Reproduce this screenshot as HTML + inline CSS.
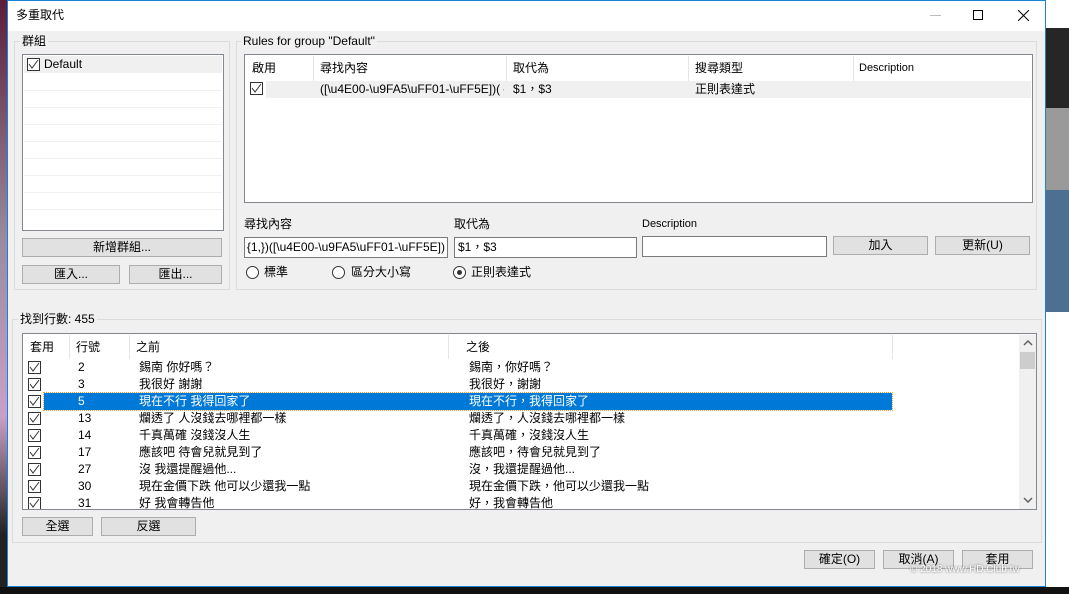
<!DOCTYPE html>
<html><head><meta charset="utf-8"><style>
*{box-sizing:border-box;margin:0;padding:0}
body{width:1069px;height:594px;overflow:hidden;position:relative;background:#fff;font-family:"Liberation Sans","Noto Sans CJK TC",sans-serif;font-size:12px;color:#000}
.a{position:absolute}
.win{left:7px;top:0;width:1039px;height:587px;background:#f0f0f0;border:1px solid #1883d7}
.grp{position:absolute;border:1px solid #dcdcdc}
.lbl{position:absolute;background:#f0f0f0;padding:0 2px;line-height:14px}
.box{position:absolute;background:#fff;border:1px solid #828790}
.btn{position:absolute;background:#e1e1e1;border:1px solid #adadad;text-align:center;line-height:16px}
.t{position:absolute;white-space:nowrap;line-height:17px}
.cb{position:absolute;width:13px;height:13px;border:1px solid #333;background:#fff}
.cb svg{position:absolute;left:0;top:0}
.rd{position:absolute;width:13px;height:13px;border:1px solid #333;border-radius:50%;background:#fff}
.inp{position:absolute;background:#fff;border:1px solid #7a7a7a;line-height:18px;padding-left:3px;overflow:hidden;white-space:nowrap}
.hl{position:absolute;height:1px;background:#f0f0f0}
.w{color:#fff}
</style></head><body>
<div class="a" style="left:0;top:0;width:7px;height:594px;background:linear-gradient(#5a1d3a,#9a8aa0 40%,#c9a0c8 70%,#222 90%)"></div>
<div class="a" style="left:1046px;top:0;width:23px;height:594px;background:#fff"></div>
<div class="a" style="left:1046px;top:28px;width:23px;height:80px;background:#262626"></div>
<div class="a" style="left:1046px;top:108px;width:23px;height:82px;background:#9a9a9a"></div>
<div class="a" style="left:1046px;top:190px;width:23px;height:122px;background:#4d6f92"></div>
<div class="a" style="left:0;top:587px;width:1069px;height:7px;background:#111"></div>
<div class="a win"></div>
<div class="a" style="left:8px;top:1px;width:1037px;height:30px;background:#fff"></div>
<div class="t" style="left:16px;top:7px">多重取代</div>
<div class="a" style="left:930px;top:15px;width:11px;height:1px;background:#bbb"></div>
<div class="a" style="left:973px;top:10px;width:10px;height:10px;border:1px solid #000"></div>
<svg class="a" style="left:1018px;top:10px" width="11" height="11"><path d="M0 0L11 11M11 0L0 11" stroke="#000" stroke-width="1"/></svg>

<div class="grp" style="left:14px;top:41px;width:216px;height:249px"></div>
<div class="lbl" style="left:20px;top:34px">群組</div>
<div class="box" style="left:22px;top:54px;width:202px;height:177px">
<div class="a" style="left:1px;top:1px;width:198px;height:17px;background:#f0f0f0"></div>
<div class="hl" style="left:1px;top:35px;width:198px"></div><div class="hl" style="left:1px;top:52px;width:198px"></div><div class="hl" style="left:1px;top:69px;width:198px"></div><div class="hl" style="left:1px;top:86px;width:198px"></div><div class="hl" style="left:1px;top:103px;width:198px"></div><div class="hl" style="left:1px;top:120px;width:198px"></div><div class="hl" style="left:1px;top:137px;width:198px"></div><div class="hl" style="left:1px;top:154px;width:198px"></div>
<div class="cb" style="left:4px;top:3px"><svg width="11" height="11"><path d="M1 5L4 9L10 1" stroke="#333" fill="none"/></svg></div>
<div class="t" style="left:21px;top:1px">Default</div>
</div>
<div class="btn" style="left:22px;top:238px;width:200px;height:19px">新增群組...</div>
<div class="btn" style="left:22px;top:265px;width:98px;height:19px">匯入...</div>
<div class="btn" style="left:129px;top:265px;width:93px;height:19px">匯出...</div>

<div class="grp" style="left:236px;top:41px;width:801px;height:249px"></div>
<div class="lbl" style="left:241px;top:34px">Rules for group "Default"</div>
<div class="box" style="left:244px;top:54px;width:789px;height:149px">
<div class="a" style="left:0;top:26px;width:786px;height:17px;background:#f0f0f0"></div>
<div class="a" style="left:68px;top:1px;width:1px;height:25px;background:#e5e5e5"></div>
<div class="a" style="left:261px;top:1px;width:1px;height:25px;background:#e5e5e5"></div>
<div class="a" style="left:443px;top:1px;width:1px;height:25px;background:#e5e5e5"></div>
<div class="a" style="left:608px;top:1px;width:1px;height:25px;background:#e5e5e5"></div>
<div class="a" style="left:0;top:26px;width:21px;height:17px;background:#fff"></div>
<div class="t" style="left:7px;top:5px">啟用</div>
<div class="t" style="left:75px;top:5px">尋找內容</div>
<div class="t" style="left:268px;top:5px">取代為</div>
<div class="t" style="left:450px;top:5px">搜尋類型</div>
<div class="t" style="left:614px;top:5px;font-size:11px">Description</div>
<div class="cb" style="left:5px;top:27px"><svg width="11" height="11"><path d="M1 5L4 9L10 1" stroke="#333" fill="none"/></svg></div>
<div class="t" style="left:75px;top:26px;width:184px;overflow:hidden">([\u4E00-\u9FA5\uFF01-\uFF5E])( {...</div>
<div class="t" style="left:268px;top:26px">$1，$3</div>
<div class="t" style="left:450px;top:26px">正則表達式</div>
</div>
<div class="t" style="left:244px;top:216px">尋找內容</div>
<div class="t" style="left:454px;top:216px">取代為</div>
<div class="t" style="left:642px;top:216px;font-size:11px">Description</div>
<div class="inp" style="left:244px;top:237px;width:204px;height:21px;padding:0 2px;direction:rtl;text-align:right"><span style="direction:ltr;unicode-bidi:bidi-override">E])( {1,})([\u4E00-\u9FA5\uFF01-\uFF5E])</span></div>
<div class="inp" style="left:454px;top:237px;width:183px;height:21px">$1，$3</div>
<div class="inp" style="left:642px;top:236px;width:185px;height:21px"></div>
<div class="btn" style="left:833px;top:236px;width:95px;height:19px">加入</div>
<div class="btn" style="left:935px;top:236px;width:95px;height:19px">更新(U)</div>
<div class="rd" style="left:246px;top:266px"></div><div class="t" style="left:264px;top:264px">標準</div>
<div class="rd" style="left:332px;top:266px"></div><div class="t" style="left:351px;top:264px">區分大小寫</div>
<div class="rd" style="left:453px;top:266px"><div class="a" style="left:3px;top:3px;width:5px;height:5px;border-radius:50%;background:#333"></div></div><div class="t" style="left:471px;top:264px">正則表達式</div>

<div class="grp" style="left:12px;top:319px;width:1030px;height:224px"></div>
<div class="lbl" style="left:18px;top:312px">找到行數: 455</div>
<div class="box" style="left:22px;top:333px;width:1015px;height:177px;overflow:hidden">
<div class="a" style="left:46px;top:1px;width:1px;height:24px;background:#e5e5e5"></div>
<div class="a" style="left:106px;top:1px;width:1px;height:24px;background:#e5e5e5"></div>
<div class="a" style="left:425px;top:1px;width:1px;height:24px;background:#e5e5e5"></div>
<div class="a" style="left:869px;top:1px;width:1px;height:24px;background:#e5e5e5"></div>
<div class="t" style="left:7px;top:5px">套用</div>
<div class="t" style="left:53px;top:5px">行號</div>
<div class="t" style="left:113px;top:5px">之前</div>
<div class="t" style="left:443px;top:5px">之後</div>
<div class="a" style="left:21px;top:59px;width:848px;height:17px;background:#0078d7;outline:1px dotted #f0a040"></div>

<div class="cb" style="left:5px;top:27px"><svg width="11" height="11"><path d="M1 5L4 9L10 1" stroke="#333" fill="none"/></svg></div>
<div class="t" style="left:55px;top:25px">2</div><div class="t" style="left:116px;top:25px">錫南 你好嗎？</div><div class="t" style="left:446px;top:25px">錫南，你好嗎？</div>
<div class="cb" style="left:5px;top:44px"><svg width="11" height="11"><path d="M1 5L4 9L10 1" stroke="#333" fill="none"/></svg></div>
<div class="t" style="left:55px;top:42px">3</div><div class="t" style="left:116px;top:42px">我很好 謝謝</div><div class="t" style="left:446px;top:42px">我很好，謝謝</div>
<div class="cb" style="left:5px;top:61px"><svg width="11" height="11"><path d="M1 5L4 9L10 1" stroke="#333" fill="none"/></svg></div>
<div class="t w" style="left:55px;top:59px">5</div><div class="t w" style="left:116px;top:59px">現在不行 我得回家了</div><div class="t w" style="left:446px;top:59px">現在不行，我得回家了</div>
<div class="cb" style="left:5px;top:78px"><svg width="11" height="11"><path d="M1 5L4 9L10 1" stroke="#333" fill="none"/></svg></div>
<div class="t" style="left:55px;top:76px">13</div><div class="t" style="left:116px;top:76px">爛透了 人沒錢去哪裡都一樣</div><div class="t" style="left:446px;top:76px">爛透了，人沒錢去哪裡都一樣</div>
<div class="cb" style="left:5px;top:95px"><svg width="11" height="11"><path d="M1 5L4 9L10 1" stroke="#333" fill="none"/></svg></div>
<div class="t" style="left:55px;top:93px">14</div><div class="t" style="left:116px;top:93px">千真萬確 沒錢沒人生</div><div class="t" style="left:446px;top:93px">千真萬確，沒錢沒人生</div>
<div class="cb" style="left:5px;top:112px"><svg width="11" height="11"><path d="M1 5L4 9L10 1" stroke="#333" fill="none"/></svg></div>
<div class="t" style="left:55px;top:110px">17</div><div class="t" style="left:116px;top:110px">應該吧 待會兒就見到了</div><div class="t" style="left:446px;top:110px">應該吧，待會兒就見到了</div>
<div class="cb" style="left:5px;top:129px"><svg width="11" height="11"><path d="M1 5L4 9L10 1" stroke="#333" fill="none"/></svg></div>
<div class="t" style="left:55px;top:127px">27</div><div class="t" style="left:116px;top:127px">沒 我還提醒過他...</div><div class="t" style="left:446px;top:127px">沒，我還提醒過他...</div>
<div class="cb" style="left:5px;top:146px"><svg width="11" height="11"><path d="M1 5L4 9L10 1" stroke="#333" fill="none"/></svg></div>
<div class="t" style="left:55px;top:144px">30</div><div class="t" style="left:116px;top:144px">現在金價下跌 他可以少還我一點</div><div class="t" style="left:446px;top:144px">現在金價下跌，他可以少還我一點</div>
<div class="cb" style="left:5px;top:163px"><svg width="11" height="11"><path d="M1 5L4 9L10 1" stroke="#333" fill="none"/></svg></div>
<div class="t" style="left:55px;top:161px">31</div><div class="t" style="left:116px;top:161px">好 我會轉告他</div><div class="t" style="left:446px;top:161px">好，我會轉告他</div>

<div class="a" style="left:996px;top:1px;width:17px;height:174px;background:#f0f0f0"></div>
<div class="a" style="left:997px;top:18px;width:15px;height:17px;background:#cdcdcd"></div>
<svg class="a" style="left:1000px;top:6px" width="10" height="6"><path d="M1 5L5 1L9 5" stroke="#606060" fill="none" stroke-width="1.5"/></svg>
<svg class="a" style="left:1000px;top:163px" width="10" height="6"><path d="M1 1L5 5L9 1" stroke="#606060" fill="none" stroke-width="1.5"/></svg>
</div>
<div class="btn" style="left:22px;top:517px;width:71px;height:19px">全選</div>
<div class="btn" style="left:101px;top:517px;width:95px;height:19px">反選</div>
<div class="btn" style="left:804px;top:550px;width:71px;height:19px">確定(O)</div>
<div class="btn" style="left:883px;top:550px;width:71px;height:19px">取消(A)</div>
<div class="btn" style="left:962px;top:550px;width:71px;height:19px">套用</div>
<div class="t" style="left:910px;top:561px;font-size:10px;color:#fff;text-shadow:0 0 2px #555">© 2018 www.HD.Club.tw</div>
</body></html>
